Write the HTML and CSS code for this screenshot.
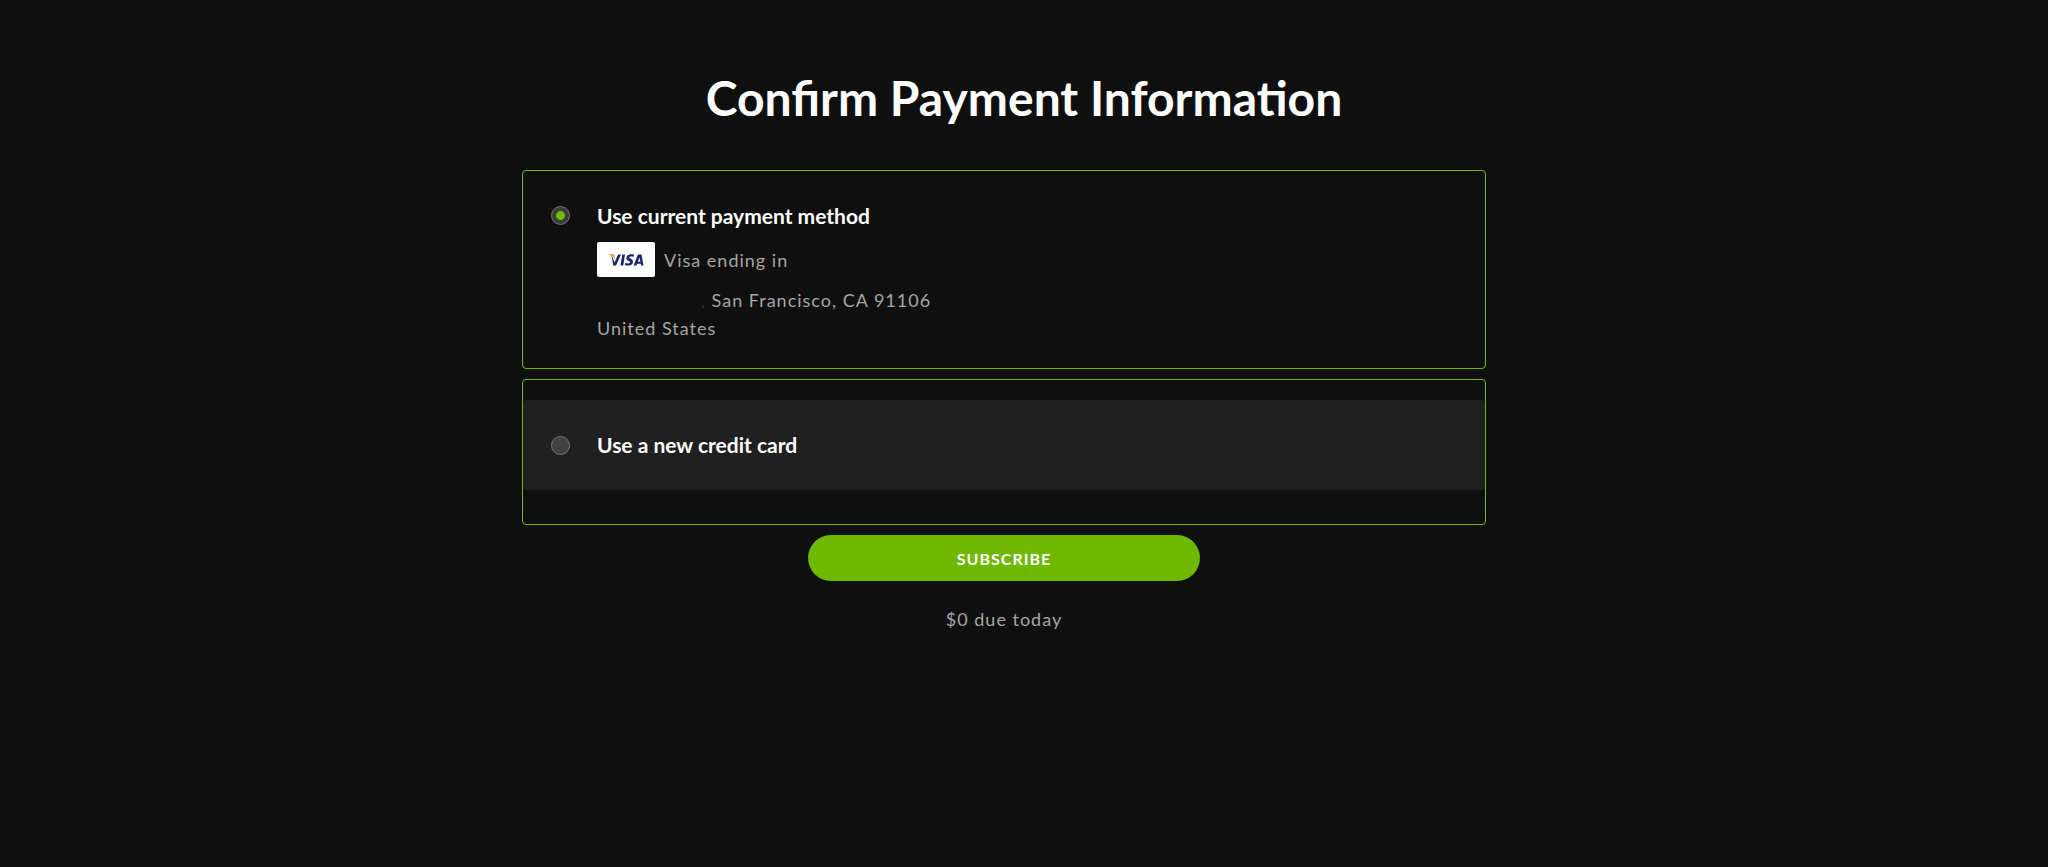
FILE: index.html
```html
<!DOCTYPE html>
<html lang="en">
<head>
    <meta charset="UTF-8">
    <meta name="viewport" content="width=device-width, initial-scale=1.0">
    <title>Confirm Payment Information</title>
    <link rel="stylesheet" href="styles.css">
</head>
<body>
    <main class="wrap">
        <h1>Confirm Payment Information</h1>

        <form class="payment">
            <div class="option current">
                <input type="radio" name="method" id="current" checked>
                <div class="info">
                    <label for="current">Use current payment method</label>
                    <div class="card">
                        <svg class="visa" viewBox="0 0 58 35" role="img" aria-label="Visa">
                            <rect width="58" height="35" rx="2" fill="#fff"/>
                            <g fill="#1a2570">
                                <path d="M14.5 12.5L17.6 20.4L21 12.5H24L19 23.5H16.2Z"/>
                                <path d="M25.3 12.5H28L26.2 23.5H23.5Z"/>
                                <path d="M37 12.8L36.5 15.1C35.4 14.6 32.3 14 32.2 15.6C32.2 16.8 36.2 16.8 36 19.9C35.8 23.8 30.5 24.2 27.8 23L28.3 20.7C29.6 21.4 33.1 22 33.2 20.3C33.2 18.9 29.3 18.8 29.4 15.9C29.6 12.4 34.2 11.8 37 12.8Z"/>
                                <path fill-rule="evenodd" d="M41.6 12.5H44.5L46.6 23.5H44.1L43.8 21.8H40.1L39.4 23.5H36.6L40.6 13.3Q40.9 12.5 41.6 12.5ZM42.6 15.5L40.9 19.8H43.4Z"/>
                            </g>
                            <path fill="#e89a2c" d="M12 12.3H16Q17.2 12.3 17.4 13.4L18.2 17.5Q16.4 14 12 12.8Z"/>
                        </svg>
                        <span>Visa ending in</span>
                    </div>
                    <p class="address"><span class="masked">,</span> San Francisco, CA 91106<br>United States</p>
                </div>
            </div>

            <div class="option new">
                <div class="row">
                    <input type="radio" name="method" id="new">
                    <label for="new">Use a new credit card</label>
                </div>
            </div>

            <button type="submit">SUBSCRIBE</button>
            <p class="due">$0 due today</p>
        </form>
    </main>
</body>
</html>
```

FILE: styles.css
```css
* {
    box-sizing: border-box;
}

body {
    margin: 0;
    background: #0f0f0f;
    color: #a5a5a5;
    font-family: Lato, "Liberation Sans", sans-serif;
    font-size: 18px;
    line-height: 28px;
    letter-spacing: 1px;
}

.wrap {
    max-width: 1004px;
    margin: 0 auto;
    padding-top: 68px;
}

h1 {
    margin: 0 0 42px;
    color: #fff;
    font-size: 48px;
    line-height: 60px;
    letter-spacing: 0;
    text-align: center;
}

.payment {
    display: flex;
    flex-direction: column;
    align-items: center;
    margin-right: 40px;
}

.option {
    width: 100%;
    margin-bottom: 10px;
    border: 1px solid #6fba00;
    border-radius: 4px;
}

.current {
    display: flex;
    align-items: flex-start;
    gap: 27px;
    padding: 31px 28px 26px;
}

.new {
    padding: 20px 0 34px;
}

.row {
    display: flex;
    align-items: center;
    gap: 27px;
    height: 90px;
    padding: 0 28px;
    border-radius: 4px;
    background: #202020;
}

label {
    color: #fff;
    font-size: 21px;
    font-weight: bold;
    letter-spacing: 0;
}

input {
    appearance: none;
    flex: none;
    width: 19px;
    height: 19px;
    margin: 0;
    border: 1px solid #777;
    border-radius: 50%;
    background: #424242;
}

.current input {
    margin-top: 4px;
}

input:checked {
    background: radial-gradient(circle, #6fba00 4px, #3a3a3a 5px);
}

.card {
    display: flex;
    align-items: center;
    gap: 9px;
    margin-top: 11px;
}

.visa {
    width: 58px;
    height: 35px;
}

.address {
    margin: 9px 0 0;
}

.masked {
    display: inline-block;
    width: 109px;
    color: #303030;
    text-align: right;
}

button {
    width: 392px;
    height: 46px;
    border: 0;
    border-radius: 23px;
    background: #6fb800;
    color: #fff;
    font-family: inherit;
    font-size: 16px;
    font-weight: bold;
    letter-spacing: 1px;
}

.due {
    margin: 24px 0 0;
}
```
